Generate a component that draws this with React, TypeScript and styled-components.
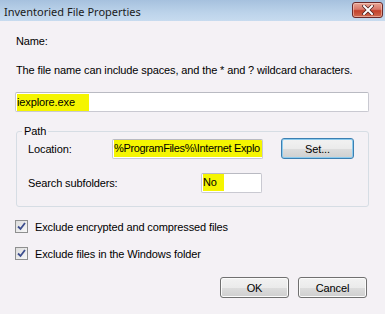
import React from "react";
import styled, { createGlobalStyle } from "styled-components";

const Global = createGlobalStyle`
  html, body { margin: 0; padding: 0; background: #f4f1f5; }
  body { width: 385px; height: 314px; overflow: hidden; }
`;

const Window = styled.div`
  width: 385px;
  height: 314px;
  background: #f4f1f5;
  font-family: Tahoma, "Liberation Sans", Arial, sans-serif;
  font-size: 11px;
  letter-spacing: -0.12px;
  color: #000;
  display: flex;
  flex-direction: column;
`;

const TitleBar = styled.div`
  height: 21px;
  display: flex;
  align-items: center;
  justify-content: space-between;
  padding: 0 2px 0 4px;
  background: linear-gradient(#a6c1de, #bcd3ea 60%, #c7dbef);
  box-sizing: border-box;
`;

const Title = styled.div`
  font-family: "Segoe UI", "Noto Sans", "Open Sans", sans-serif;
  font-size: 11px;
  letter-spacing: 0;
  color: #1b1b1b;
  padding-top: 1px;
`;

const CloseBtn = styled.div`
  width: 31px;
  height: 16px;
  margin-top: -1px;
  box-sizing: border-box;
  border: 1px solid #6b2a2a;
  border-radius: 3px;
  background: linear-gradient(#e8a796, #d8786a 45%, #c3412a 55%, #cf6a50);
  display: flex;
  align-items: center;
  justify-content: center;
  box-shadow: inset 0 0 0 1px rgba(255, 220, 210, 0.5);
`;

const Content = styled.div`
  display: flex;
  flex-direction: column;
  padding: 0 16px 0 15px;
`;

const Label = styled.div<{ $mt: number }>`
  margin-top: ${(p) => p.$mt}px;
  padding-left: 1px;
  line-height: 13px;
  white-space: nowrap;
`;

const Mark = styled.span<{ $pad?: number; $full?: boolean; $tight?: boolean }>`
  display: inline-block;
  background: #f5f500;
  line-height: 17px;
  padding-right: ${(p) => p.$pad ?? 0}px;
  ${(p) => (p.$full ? "flex: 1;" : "")}
  ${(p) => (p.$tight ? "letter-spacing: -0.35px;" : "")}
  white-space: nowrap;
`;

const TextBox = styled.div<{ $w?: number }>`
  box-sizing: border-box;
  height: 20px;
  ${(p) => (p.$w ? `width: ${p.$w}px;` : "")}
  background: #fff;
  border: 1px solid #c9c9d1;
  border-top-color: #b9bac2;
  border-radius: 2px;
  display: flex;
  align-items: center;
  padding-left: 1px;
  overflow: hidden;
  white-space: nowrap;
`;

const NameBox = styled(TextBox)`
  margin-top: 15px;
`;

const Group = styled.fieldset`
  margin: 13px 1px 0 1px;
  padding: 0 14px 0 11px;
  height: 82px;
  box-sizing: border-box;
  border: 1px solid #d6dde4;
  border-radius: 3px;
  display: flex;
  flex-direction: column;
  gap: 13px;
`;

const Legend = styled.legend`
  padding: 0 2px;
  margin-left: -6px;
  line-height: 13px;
`;

const Row = styled.div`
  display: flex;
  align-items: center;
  height: 21px;
`;

const FieldLabel = styled.div<{ $w: number }>`
  width: ${(p) => p.$w}px;
  flex-shrink: 0;
`;

const Button = styled.div<{ $default?: boolean; $w: number }>`
  box-sizing: border-box;
  width: ${(p) => p.$w}px;
  height: 21px;
  border: 1px solid ${(p) => (p.$default ? "#3c7fb1" : "#707070")};
  border-radius: 3px;
  background: linear-gradient(#f2f2f2, #ebebeb 50%, #dddddd 51%, #cfcfcf);
  box-shadow: inset 0 0 0 1px ${(p) => (p.$default ? "#8ccbee" : "#fbfbfb")};
  display: flex;
  align-items: center;
  justify-content: center;
`;

const SetButton = styled(Button)`
  margin-left: 18px;
`;

const CheckRow = styled.div<{ $mt: number }>`
  display: flex;
  align-items: center;
  margin-top: ${(p) => p.$mt}px;
  gap: 7px;
  height: 15px;
`;

const Box = styled.div`
  width: 13px;
  height: 13px;
  box-sizing: border-box;
  border: 1px solid #8e8f8f;
  background: linear-gradient(135deg, #dcdcdc, #f8f8f8);
  display: flex;
  align-items: center;
  justify-content: center;
`;

const Buttons = styled.div`
  display: flex;
  justify-content: flex-end;
  gap: 9px;
  margin-top: 16px;
  padding-right: 2px;
`;

const Check = () => (
  <Box>
    <svg width="9" height="9" viewBox="0 0 9 9">
      <path d="M1 4.5 L3.5 7 L8 1" fill="none" stroke="#3d4e8e" strokeWidth="1.8" />
    </svg>
  </Box>
);

export default function App() {
  return (
    <Window>
      <Global />
      <TitleBar>
        <Title>Inventoried File Properties</Title>
        <CloseBtn>
          <svg width="12" height="10" viewBox="0 0 12 10">
            <path d="M2 1 L10 9 M10 1 L2 9" stroke="#4a2020" strokeWidth="3.4" strokeLinecap="square" />
            <path d="M2 1 L10 9 M10 1 L2 9" stroke="#ffffff" strokeWidth="2" strokeLinecap="square" />
          </svg>
        </CloseBtn>
      </TitleBar>
      <Content>
        <Label $mt={14}>Name:</Label>
        <Label $mt={16}>The file name can include spaces, and the * and ? wildcard characters.</Label>
        <NameBox>
          <Mark $pad={14}>iexplore.exe</Mark>
        </NameBox>
        <Group>
          <Legend>Path</Legend>
          <Row>
            <FieldLabel $w={84}>Location:</FieldLabel>
            <TextBox $w={151}>
              <Mark $full $tight>%ProgramFiles%\Internet Explo</Mark>
            </TextBox>
            <SetButton $default $w={73}>Set...</SetButton>
          </Row>
          <Row>
            <FieldLabel $w={173}>Search subfolders:</FieldLabel>
            <TextBox $w={61}>
              <Mark $pad={7}>No</Mark>
            </TextBox>
          </Row>
        </Group>
        <CheckRow $mt={12}>
          <Check />
          <span>Exclude encrypted and compressed files</span>
        </CheckRow>
        <CheckRow $mt={12}>
          <Check />
          <span>Exclude files in the Windows folder</span>
        </CheckRow>
        <Buttons>
          <Button $w={69}>OK</Button>
          <Button $w={69}>Cancel</Button>
        </Buttons>
      </Content>
    </Window>
  );
}
